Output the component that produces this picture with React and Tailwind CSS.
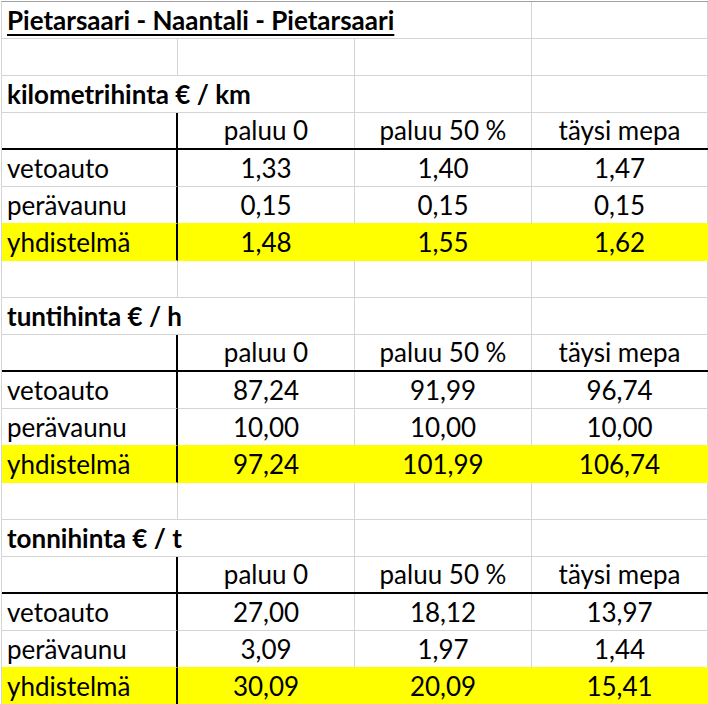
import React from "react";

const sections = [
  {
    title: "kilometrihinta € / km",
    rows: [
      ["vetoauto", "1,33", "1,40", "1,47"],
      ["perävaunu", "0,15", "0,15", "0,15"],
      ["yhdistelmä", "1,48", "1,55", "1,62"],
    ],
  },
  {
    title: "tuntihinta € / h",
    rows: [
      ["vetoauto", "87,24", "91,99", "96,74"],
      ["perävaunu", "10,00", "10,00", "10,00"],
      ["yhdistelmä", "97,24", "101,99", "106,74"],
    ],
  },
  {
    title: "tonnihinta € / t",
    rows: [
      ["vetoauto", "27,00", "18,12", "13,97"],
      ["perävaunu", "3,09", "1,97", "1,44"],
      ["yhdistelmä", "30,09", "20,09", "15,41"],
    ],
  },
];

function BlankRow() {
  return (
    <div className="flex h-[37px]">
      <div className="w-[176px] border-r border-b border-[#d4d4d4]" />
      <div className="w-[177px] border-r border-b border-[#d4d4d4]" />
      <div className="w-[177px] border-r border-b border-[#d4d4d4]" />
      <div className="w-[176px] border-r border-b border-[#d4d4d4]" />
    </div>
  );
}

function Section({ s }) {
  return (
    <>
      <div className="flex h-[37px]">
        <div className="w-[353px] border-r border-b border-[#d4d4d4] pl-[5px] font-bold whitespace-nowrap">
          {s.title}
        </div>
        <div className="w-[177px] border-r border-b border-[#d4d4d4]" />
        <div className="w-[176px] border-r border-b border-[#d4d4d4]" />
      </div>
      <div className="flex h-[37px] border-b-2 border-black">
        <div className="w-[176px] border-r-2 border-black" />
        <div className="w-[177px] border-r border-[#d4d4d4] text-center leading-[35px]">paluu 0</div>
        <div className="w-[177px] border-r border-[#d4d4d4] text-center leading-[35px]">paluu 50 %</div>
        <div className="w-[176px] border-r border-[#d4d4d4] text-center leading-[35px]">täysi mepa</div>
      </div>
      {s.rows.map((r, i) => {
        const last = i === 2;
        const nextYellow = i === 1;
        const bb = last
          ? "border-b-[#ffff00]"
          : nextYellow
          ? "border-b-[#ffff00]"
          : "border-b-[#d4d4d4]";
        const br = last ? "border-r-[#ffff00]" : "border-r-[#d4d4d4]";
        return (
          <div key={i} className={`flex h-[37px] ${last ? "bg-[#ffff00]" : ""}`}>
            <div className={`w-[176px] border-r-2 border-r-black border-b ${bb} pl-[5px] whitespace-nowrap`}>
              {r[0]}
            </div>
            <div className={`w-[177px] border-r border-b ${br} ${bb} text-center`}>{r[1]}</div>
            <div className={`w-[177px] border-r border-b ${br} ${bb} text-center`}>{r[2]}</div>
            <div className={`w-[176px] border-r border-b ${br} ${bb} text-center`}>{r[3]}</div>
          </div>
        );
      })}
    </>
  );
}

export default function App() {
  return (
    <div className="w-[708px] h-[704px] overflow-hidden bg-white pl-px pt-px font-['Lato',sans-serif] text-[26px] leading-[36px] text-black">
      <div className="border-l border-t border-l-[#d4d4d4] border-t-[#a0a0a0]">
        <div className="flex h-[37px]">
          <div className="w-[530px] border-r border-b border-[#d4d4d4] pl-[5px] font-bold whitespace-nowrap">
            <span className="underline decoration-2 underline-offset-[4px]">
              Pietarsaari - Naantali - Pietarsaari
            </span>
          </div>
          <div className="w-[176px] border-r border-b border-[#d4d4d4]" />
        </div>
        <BlankRow />
        <Section s={sections[0]} />
        <BlankRow />
        <Section s={sections[1]} />
        <BlankRow />
        <Section s={sections[2]} />
      </div>
    </div>
  );
}
